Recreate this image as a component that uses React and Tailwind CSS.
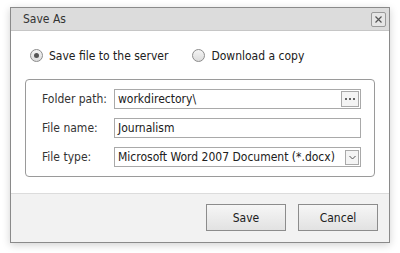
import React, { useState } from 'react';

const font = { fontFamily: '"DejaVu Sans Condensed", "DejaVu Sans", sans-serif' };

const Radio = ({ checked, label, onClick }) => (
    <label className="flex items-center gap-[6px] cursor-pointer" onClick={onClick}>
        <span className="w-[13px] h-[13px] rounded-full border border-[#8c8c8c] bg-gradient-to-b from-[#f4f4f4] to-[#dcdcdc] flex items-center justify-center">
            {checked && <span className="w-[5px] h-[5px] rounded-full bg-[#555]" />}
        </span>
        <span className="text-[12px] text-[#202020]">{label}</span>
    </label>
);

const Row = ({ label, children }) => (
    <div className="flex items-center h-[20px]">
        <div className="w-[72px] flex-none whitespace-nowrap text-[12px] text-[#333]">{label}</div>
        <div className="flex-1 h-[20px] border border-[#a9a9a9] bg-white flex items-center pl-[3px] pr-[1px]">
            {children}
        </div>
    </div>
);

export default function App() {
    const [mode, setMode] = useState('server');

    return (
        <div className="w-[400px] h-[253px] bg-white" style={font}>
            <div className="ml-[10px] pt-[7px]">
                <div className="w-[380px] h-[236px] border border-[#8a8a8a] bg-white flex flex-col shadow-[0_2px_8px_rgba(0,0,0,0.18)]">
                    {/* Title bar */}
                    <div className="h-[23px] bg-[#dcdcdc] border-b border-[#c6c6c6] flex items-center justify-between pl-[12px] pr-[3px]">
                        <span className="text-[12px] text-[#333]">Save As</span>
                        <button className="w-[15px] h-[15px] border border-[#9a9a9a] rounded-[2px] bg-[#e6e6e6] flex items-center justify-center">
                            <svg width="7" height="7" viewBox="0 0 7 7">
                                <path d="M0.5 0.5 L6.5 6.5 M6.5 0.5 L0.5 6.5" stroke="#555" strokeWidth="1.2" />
                            </svg>
                        </button>
                    </div>

                    {/* Body */}
                    <div className="flex-1 px-[14px] pt-[17px]">
                        <div className="flex items-center gap-[24px] pl-[5px] h-[15px]">
                            <Radio checked={mode === 'server'} label="Save file to the server" onClick={() => setMode('server')} />
                            <Radio checked={mode === 'copy'} label="Download a copy" onClick={() => setMode('copy')} />
                        </div>

                        <div className="mt-[16px] w-[350px] h-[98px] border border-[#9a9a9a] rounded-[4px] pl-[16px] pr-[13px] pt-[9px] flex flex-col gap-[9px]">
                            <Row label="Folder path:">
                                <span className="flex-1 text-[12px] text-[#202020]">workdirectory\</span>
                                <span className="w-[18px] h-[16px] border border-[#a9a9a9] bg-[#f4f4f4] flex items-center justify-center gap-[2px]">
                                    <span className="w-[2px] h-[2px] bg-[#666]" />
                                    <span className="w-[2px] h-[2px] bg-[#666]" />
                                    <span className="w-[2px] h-[2px] bg-[#666]" />
                                </span>
                            </Row>
                            <Row label="File name:">
                                <span className="flex-1 text-[12px] text-[#202020]">Journalism</span>
                            </Row>
                            <Row label="File type:">
                                <span className="flex-1 text-[12px] text-[#202020] whitespace-nowrap overflow-hidden">Microsoft Word 2007 Document (*.docx)</span>
                                <span className="w-[14px] h-[15px] border border-[#a9a9a9] bg-[#f4f4f4] flex items-center justify-center">
                                    <svg width="7" height="5" viewBox="0 0 7 5">
                                        <path d="M0.5 1 L3.5 4 L6.5 1" stroke="#555" strokeWidth="1" fill="none" />
                                    </svg>
                                </span>
                            </Row>
                        </div>
                    </div>

                    {/* Footer */}
                    <div className="h-[49px] bg-[#f2f2f2] border-t border-[#dcdcdc] flex items-start justify-end gap-[12px] pr-[11px] pt-[10px]">
                        <button className="w-[80px] h-[27px] border border-[#8c8c8c] bg-gradient-to-b from-[#f6f6f6] to-[#e2e2e2] text-[12px] text-[#202020]">Save</button>
                        <button className="w-[80px] h-[27px] border border-[#8c8c8c] bg-gradient-to-b from-[#f6f6f6] to-[#e2e2e2] text-[12px] text-[#202020]">Cancel</button>
                    </div>
                </div>
            </div>
        </div>
    );
}
